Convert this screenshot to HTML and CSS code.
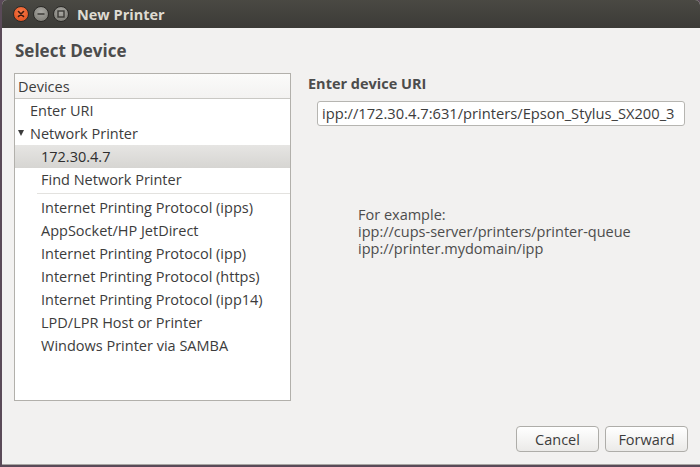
FILE: index.html
```html
<!DOCTYPE html>
<html>
<head>
<meta charset="utf-8">
<link rel="stylesheet" href="styles.css">
</head>
<body>
<div class="window">
  <div class="titlebar">
    <div class="controls">
      <span class="btn close"><svg width="14" height="14" viewBox="0 0 14 14"><path d="M4.5 4.5 L9.5 9.5 M9.5 4.5 L4.5 9.5" stroke="#3a1a10" stroke-width="1.6" stroke-linecap="round"/></svg></span>
      <span class="btn"><svg width="14" height="14" viewBox="0 0 14 14"><path d="M3.5 7 H10.5" stroke="#3c3b37" stroke-width="1.6"/></svg></span>
      <span class="btn"><svg width="14" height="14" viewBox="0 0 14 14"><rect x="4" y="4" width="6" height="6" fill="none" stroke="#3c3b37" stroke-width="1.4"/></svg></span>
    </div>
    <div class="title">New Printer</div>
  </div>
  <div class="content">
    <h1 class="heading">Select Device</h1>
    <div class="main">
      <div class="tree">
        <div class="tree-header">Devices</div>
        <div class="row lvl1">Enter URI</div>
        <div class="row lvl0"><span class="expander"></span>Network Printer</div>
        <div class="row lvl2 selected">172.30.4.7</div>
        <div class="row lvl2">Find Network Printer</div>
        <div class="sep"></div>
        <div class="row lvl2">Internet Printing Protocol (ipps)</div>
        <div class="row lvl2">AppSocket/HP JetDirect</div>
        <div class="row lvl2">Internet Printing Protocol (ipp)</div>
        <div class="row lvl2">Internet Printing Protocol (https)</div>
        <div class="row lvl2">Internet Printing Protocol (ipp14)</div>
        <div class="row lvl2">LPD/LPR Host or Printer</div>
        <div class="row lvl2">Windows Printer via SAMBA</div>
      </div>
      <div class="panel">
        <div class="label">Enter device URI</div>
        <div class="entry">ipp://172.30.4.7:631/printers/Epson_Stylus_SX200_3</div>
        <div class="example">
          <div class="ex-line">For example:</div>
          <div class="ex-line">ipp://cups-server/printers/printer-queue</div>
          <div class="ex-line">ipp://printer.mydomain/ipp</div>
        </div>
      </div>
    </div>
    <div class="actions">
      <button class="button">Cancel</button>
      <button class="button">Forward</button>
    </div>
  </div>
</div>
</body>
</html>
```

FILE: styles.css
```css
html, body {
  margin: 0;
  padding: 0;
  width: 700px;
  height: 467px;
  overflow: hidden;
  background: #5a4a58;
  font-family: "Open Sans", "DejaVu Sans", sans-serif;
}
.window {
  margin-left: 2px;
  width: 698px;
  height: 464px;
  background: #f2f1f0;
  border-bottom: 1px solid #a8a7a3;
  border-radius: 5px 5px 0 0;
  overflow: hidden;
  display: flex;
  flex-direction: column;
}
.titlebar {
  height: 28px;
  flex: none;
  background: linear-gradient(#4a4943, #3c3b37);
  display: flex;
  align-items: center;
}
.controls {
  display: flex;
  gap: 4px;
  margin-left: 11px;
}
.btn {
  width: 14px;
  height: 14px;
  border-radius: 50%;
  background: radial-gradient(circle at 50% 35%, #a9a8a3, #77766f);
  border: 1px solid #2b2a27;
  display: flex;
}
.btn.close {
  background: radial-gradient(circle at 50% 35%, #f67a4a, #df4a17);
}
.title {
  margin-left: 8px;
  color: #dfdbd2;
  font-weight: bold;
  font-size: 14.5px;
}
.content {
  flex: 1;
  display: flex;
  flex-direction: column;
  padding: 0 12px 0 12px;
}
.heading {
  margin: 11px 0 10px 1px;
  font-size: 17px;
  font-weight: bold;
  color: #4c4c4c;
  line-height: 24px;
}
.main {
  display: flex;
  height: 328px;
}
.tree {
  width: 275px;
  border: 1px solid #b2b0ab;
  background: #ffffff;
  color: #3c3c3c;
  font-size: 14.5px;
}
.tree-header {
  height: 24px;
  line-height: 26px;
  padding-left: 3px;
  background: linear-gradient(#fbfbfa, #f3f2f1);
  border-bottom: 1px solid #c9c8c4;
}
.row {
  height: 23px;
  line-height: 23px;
  white-space: nowrap;
  display: flex;
  align-items: center;
}
.lvl0 { padding-left: 2px; }
.lvl1 { padding-left: 15px; }
.lvl2 { padding-left: 26px; }
.expander {
  width: 0;
  height: 0;
  border-left: 3.5px solid transparent;
  border-right: 3.5px solid transparent;
  border-top: 6px solid #3c3c3c;
  margin: 0 6px 2px 1px;
}
.row.selected {
  background: linear-gradient(#e6e5e3, #d6d5d2);
  color: #2e2e2e;
}
.sep {
  height: 1px;
  margin: 2px 0 2px 22px;
  background: #e3e2df;
}
.panel {
  flex: 1;
  padding-left: 17px;
  color: #4c4c4c;
}
.label {
  margin-top: 2px;
  font-weight: bold;
  font-size: 14.5px;
  line-height: 18px;
}
.entry {
  margin: 8px 0 0 9px;
  width: 362px;
  height: 23px;
  border: 1px solid #b6b5b1;
  border-radius: 3px;
  background: #fff;
  color: #3c3c3c;
  font-size: 14.7px;
  line-height: 23px;
  padding-left: 4px;
  white-space: nowrap;
}
.example {
  margin: 80px 0 0 50px;
  font-size: 14.5px;
  color: #4c4c4c;
}
.ex-line {
  height: 17px;
  line-height: 17px;
  white-space: nowrap;
}
.actions {
  display: flex;
  justify-content: flex-end;
  gap: 6px;
  margin-top: 25px;
  padding-right: 0;
}
.button {
  width: 83px;
  height: 26px;
  border: 1px solid #aeada9;
  border-radius: 4px;
  background: linear-gradient(#ffffff, #ebeae8);
  color: #3c3c3c;
  font-family: "Open Sans", "DejaVu Sans", sans-serif;
  font-size: 14.5px;
  padding: 0;
}
```
